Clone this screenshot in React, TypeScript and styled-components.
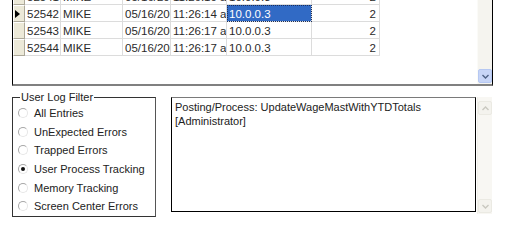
import styled, { createGlobalStyle } from 'styled-components'

const GlobalStyle = createGlobalStyle`
  html, body {
    margin: 0;
    padding: 0;
    background: #fff;
  }
  body {
    font-family: "Liberation Sans", Arial, sans-serif;
    font-size: 11px;
    color: #222;
  }
  * {
    box-sizing: border-box;
  }
`

const Screen = styled.div`
  width: 514px;
  height: 221px;
  overflow: hidden;
`

const GridFrame = styled.div`
  display: flex;
  width: 481px;
  height: 86px;
  margin-left: 12px;
  border-left: 1px solid #000;
  border-right: 1px solid #000;
  border-bottom: 2px solid #808080;
`

const GridBody = styled.div`
  flex: 1;
  overflow: hidden;
  background: #fff;
`

const Rows = styled.div`
  margin-top: -12px;
`

const Row = styled.div`
  display: flex;
  height: 17px;
`

const RowHeader = styled.div`
  width: 12px;
  height: 17px;
  background: #ece9d8;
  border-top: 1px solid #fff;
  border-left: 1px solid #fff;
  border-right: 1px solid #aca899;
  border-bottom: 1px solid #aca899;
  display: flex;
  align-items: center;
  padding-left: 1px;
`

const CurrentArrow = styled.span`
  width: 0;
  height: 0;
  border-top: 4px solid transparent;
  border-bottom: 4px solid transparent;
  border-left: 5px solid #000;
`

const Cell = styled.div<{ $w: number; $align?: 'left' | 'right'; $selected?: boolean }>`
  width: ${(p) => p.$w}px;
  height: 17px;
  padding: 2px ${(p) => (p.$align === 'right' ? 3 : 2)}px 0 2px;
  font-size: 11.5px;
  line-height: 14px;
  white-space: nowrap;
  overflow: hidden;
  text-align: ${(p) => p.$align || 'left'};
  border-right: 1px solid #dcdcdc;
  border-bottom: 1px solid #dcdcdc;
  color: ${(p) => (p.$selected ? '#fff' : '#2a2a2a')};
  background: ${(p) => (p.$selected ? '#316ac5' : 'transparent')};
  outline: ${(p) => (p.$selected ? '1px dotted #1c2f5a' : 'none')};
  outline-offset: -1px;
`

const ScrollTrack = styled.div<{ $height: number }>`
  width: 15px;
  height: ${(p) => p.$height}px;
  background: #f5f4ef;
  border-left: 1px solid #fbfbf8;
  display: flex;
  flex-direction: column;
  justify-content: flex-end;
  padding-bottom: 1px;
`

const TextScroll = styled(ScrollTrack)`
  margin-left: 1px;
  justify-content: space-between;
  padding: 4px 0 1px;
  background: #f8f7f3;
  border-left: 1px solid #f1f0ea;
`

const ScrollButton = styled.div<{ $active?: boolean }>`
  width: 14px;
  height: 14px;
  border-radius: 2px;
  display: flex;
  align-items: center;
  justify-content: center;
  background: ${(p) => (p.$active ? '#c7d5f7' : '#f4f3ee')};
  border: 1px solid ${(p) => (p.$active ? '#b6c8f2' : '#ebeae3')};
`

const Lower = styled.div`
  display: flex;
  align-items: flex-start;
  margin-top: 4px;
`

const GroupBox = styled.fieldset`
  margin: 0 0 0 12px;
  padding: 0 0 0 5px;
  width: 144px;
  height: 127px;
  border: 1px solid #333;
  border-right-color: #555;
  min-width: 0;
`

const Caption = styled.legend`
  padding: 0 1px;
  margin-left: 2px;
  font-size: 11px;
  line-height: 14px;
  color: #222;
`

const OptionList = styled.div`
  display: flex;
  flex-direction: column;
`

const Option = styled.label`
  display: flex;
  align-items: center;
  gap: 6px;
  height: 18.6px;
  white-space: nowrap;
  color: #222;
`

const RadioMark = styled.span<{ $checked?: boolean }>`
  width: 10px;
  height: 10px;
  border-radius: 50%;
  border: 1px solid;
  border-color: #a8a8a8 #e6e6e6 #e6e6e6 #a8a8a8;
  background: #fff;
  display: flex;
  align-items: center;
  justify-content: center;
  &::after {
    content: '';
    width: 4px;
    height: 4px;
    border-radius: 50%;
    background: ${(p) => (p.$checked ? '#111' : 'transparent')};
  }
`

const TextPanel = styled.div`
  display: flex;
  margin-left: 15px;
  margin-top: 7px;
`

const TextBox = styled.div`
  width: 305px;
  height: 115px;
  border: 1px solid #000;
  border-top-color: #7a7a7a;
  padding: 2px 3px;
  line-height: 14px;
  color: #222;
`

function Chevron({ up, color }: { up?: boolean; color: string }) {
  return (
    <svg width="7" height="5" viewBox="0 0 7 5">
      <path
        d={up ? 'M0.5 4 L3.5 1 L6.5 4' : 'M0.5 1 L3.5 4 L6.5 1'}
        fill="none"
        stroke={color}
        strokeWidth="1.4"
      />
    </svg>
  )
}

const columns = [
  { key: 'id', w: 36 },
  { key: 'user', w: 62 },
  { key: 'date', w: 48 },
  { key: 'time', w: 56 },
  { key: 'ip', w: 85 },
  { key: 'count', w: 68, align: 'right' as const },
]

type LogRow = { id: string; user: string; date: string; time: string; ip: string; count: string }

const rows: LogRow[] = [
  { id: '52541', user: 'MIKE', date: '05/16/2007', time: '11:26:10 am', ip: '10.0.0.3', count: '2' },
  { id: '52542', user: 'MIKE', date: '05/16/2007', time: '11:26:14 am', ip: '10.0.0.3', count: '2' },
  { id: '52543', user: 'MIKE', date: '05/16/2007', time: '11:26:17 am', ip: '10.0.0.3', count: '2' },
  { id: '52544', user: 'MIKE', date: '05/16/2007', time: '11:26:17 am', ip: '10.0.0.3', count: '2' },
]

const filters = [
  'All Entries',
  'UnExpected Errors',
  'Trapped Errors',
  'User Process Tracking',
  'Memory Tracking',
  'Screen Center Errors',
]

export default function App() {
  const current = 1
  const checked = 3
  return (
    <Screen>
      <GlobalStyle />
      <GridFrame>
        <GridBody>
          <Rows>
            {rows.map((r, i) => (
              <Row key={r.id}>
                <RowHeader>{i === current && <CurrentArrow />}</RowHeader>
                {columns.map((c) => (
                  <Cell
                    key={c.key}
                    $w={c.w}
                    $align={c.align}
                    $selected={i === current && c.key === 'ip'}
                  >
                    {r[c.key as keyof LogRow]}
                  </Cell>
                ))}
              </Row>
            ))}
          </Rows>
        </GridBody>
        <ScrollTrack $height={84}>
          <ScrollButton $active>
            <Chevron color="#4d6185" />
          </ScrollButton>
        </ScrollTrack>
      </GridFrame>
      <Lower>
        <GroupBox>
          <Caption>User Log Filter</Caption>
          <OptionList>
            {filters.map((f, i) => (
              <Option key={f}>
                <RadioMark $checked={i === checked} />
                {f}
              </Option>
            ))}
          </OptionList>
        </GroupBox>
        <TextPanel>
          <TextBox>
            Posting/Process: UpdateWageMastWithYTDTotals
            <br />
            [Administrator]
          </TextBox>
          <TextScroll $height={117}>
            <ScrollButton>
              <Chevron up color="#c9c8c0" />
            </ScrollButton>
            <ScrollButton>
              <Chevron color="#c9c8c0" />
            </ScrollButton>
          </TextScroll>
        </TextPanel>
      </Lower>
    </Screen>
  )
}
